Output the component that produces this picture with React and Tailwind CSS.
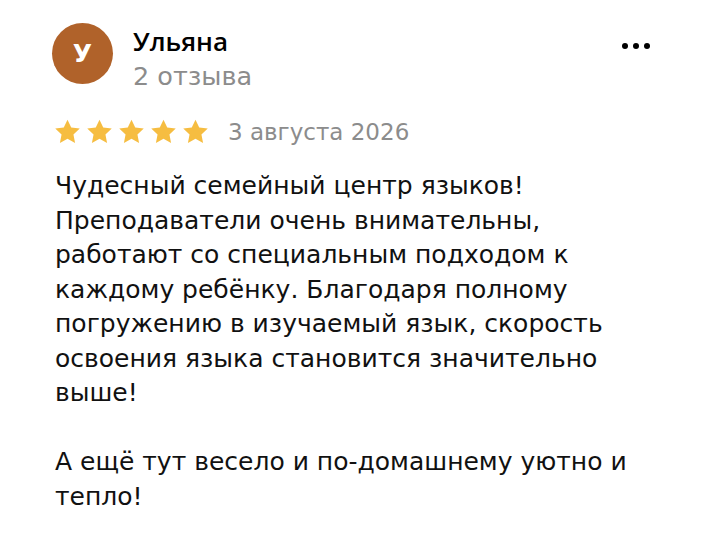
const Star = () => (
  <svg width="29" height="28" viewBox="0 0 24 24" className="shrink-0">
    <path d="M12 1.5l3.2 6.7 7.3.9-5.4 5 1.4 7.3L12 17.8l-6.5 3.6 1.4-7.3-5.4-5 7.3-.9z" fill="#f6bd41" />
  </svg>
);

export default function App() {
  return (
    <div className="h-[536px] w-[708px] overflow-hidden bg-white pl-[52px] pr-[20px] pt-[23px]" style={{ fontFamily: '"DejaVu Sans", sans-serif' }}>
      <div className="flex items-start">
        <div className="flex h-[61px] w-[61px] shrink-0 items-center justify-center rounded-full bg-[#b0622a] text-[25px] font-bold text-white">У</div>
        <div className="ml-[20px] flex-1">
          <div className="text-[26px] font-semibold leading-[36px] text-black" style={{ fontFamily: '"Open Sans", sans-serif' }}>Ульяна</div>
          <div className="text-[25.5px] leading-[34px] text-[#8c8c8c]">2 отзыва</div>
        </div>
        <div className="mr-[38px] mt-[20px] flex gap-[5px]">
          <span className="h-[6px] w-[6px] rounded-full bg-black" />
          <span className="h-[6px] w-[6px] rounded-full bg-black" />
          <span className="h-[6px] w-[6px] rounded-full bg-black" />
        </div>
      </div>
      <div className="mt-[23px] flex items-center pl-[1px]">
        <div className="flex gap-[3px]">
          <Star /><Star /><Star /><Star /><Star />
        </div>
        <span className="ml-[18px] text-[23px] leading-[32px] text-[#8c8c8c]">3 августа 2026</span>
      </div>
      <div className="mt-[21px] pl-[3px] text-[25px] leading-[34.5px] text-[#111]">
        <p>Чудесный семейный центр языков!<br />Преподаватели очень внимательны,<br />работают со специальным подходом к<br />каждому ребёнку. Благодаря полному<br />погружению в изучаемый язык, скорость<br />освоения языка становится значительно<br />выше!</p>
        <p className="mt-[34.5px]">А ещё тут весело и по-домашнему уютно и<br />тепло!</p>
      </div>
    </div>
  );
}
